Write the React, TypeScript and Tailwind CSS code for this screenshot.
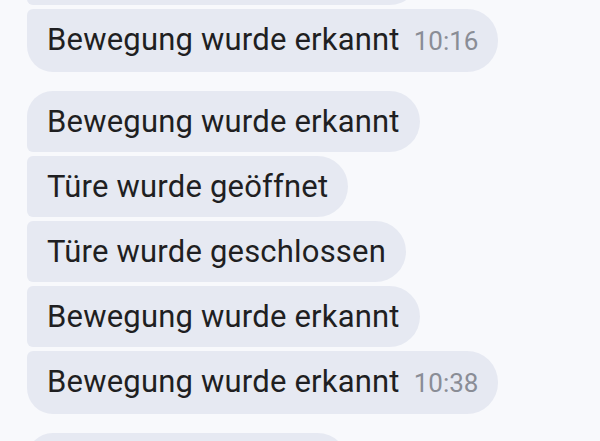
import React from 'react';

type Msg = { text: string; time?: string };
type Group = Msg[];

const groups: Group[] = [
  [{ text: 'Bewegung wurde erkannt' }, { text: 'Bewegung wurde erkannt', time: '10:16' }],
  [
    { text: 'Bewegung wurde erkannt' },
    { text: 'Türe wurde geöffnet' },
    { text: 'Türe wurde geschlossen' },
    { text: 'Bewegung wurde erkannt' },
    { text: 'Bewegung wurde erkannt', time: '10:38' },
  ],
  [{ text: 'Türe wurde geöffnet' }],
];

const cornerClass = (isFirst: boolean, isLast: boolean) => {
  const top = isFirst ? 'rounded-tl-[26px]' : 'rounded-tl-[6px]';
  const bottom = isLast ? 'rounded-bl-[26px]' : 'rounded-bl-[6px]';
  return `${top} ${bottom}`;
};

const Bubble: React.FC<{ msg: Msg; isFirst: boolean; isLast: boolean }> = ({ msg, isFirst, isLast }) => (
  <div
    className={`flex items-baseline gap-[14px] rounded-r-[31px] bg-[#e6e9f2] py-[14px] pl-[20px] pr-[20px] ${cornerClass(isFirst, isLast)}`}
  >
    <span className="text-[31px] leading-[33px] tracking-[0.2px] text-[#1f1f22]">{msg.text}</span>
    {msg.time && <span className="text-[26px] leading-[33px] text-[#8a8d96]">{msg.time}</span>}
  </div>
);

const App: React.FC = () => {
  return (
    <main
      className="h-[441px] w-[600px] overflow-hidden bg-[#f8f9fc]"
      style={{ fontFamily: 'Roboto, "Noto Sans", sans-serif' }}
    >
      <div className="mt-[-56px] flex flex-col items-start gap-[19px] pl-[27px]">
        {groups.map((group, gi) => (
          <div key={gi} className="flex flex-col items-start gap-[4px]">
            {group.map((msg, mi) => (
              <Bubble key={mi} msg={msg} isFirst={mi === 0} isLast={mi === group.length - 1} />
            ))}
          </div>
        ))}
      </div>
    </main>
  );
};

export default App;
